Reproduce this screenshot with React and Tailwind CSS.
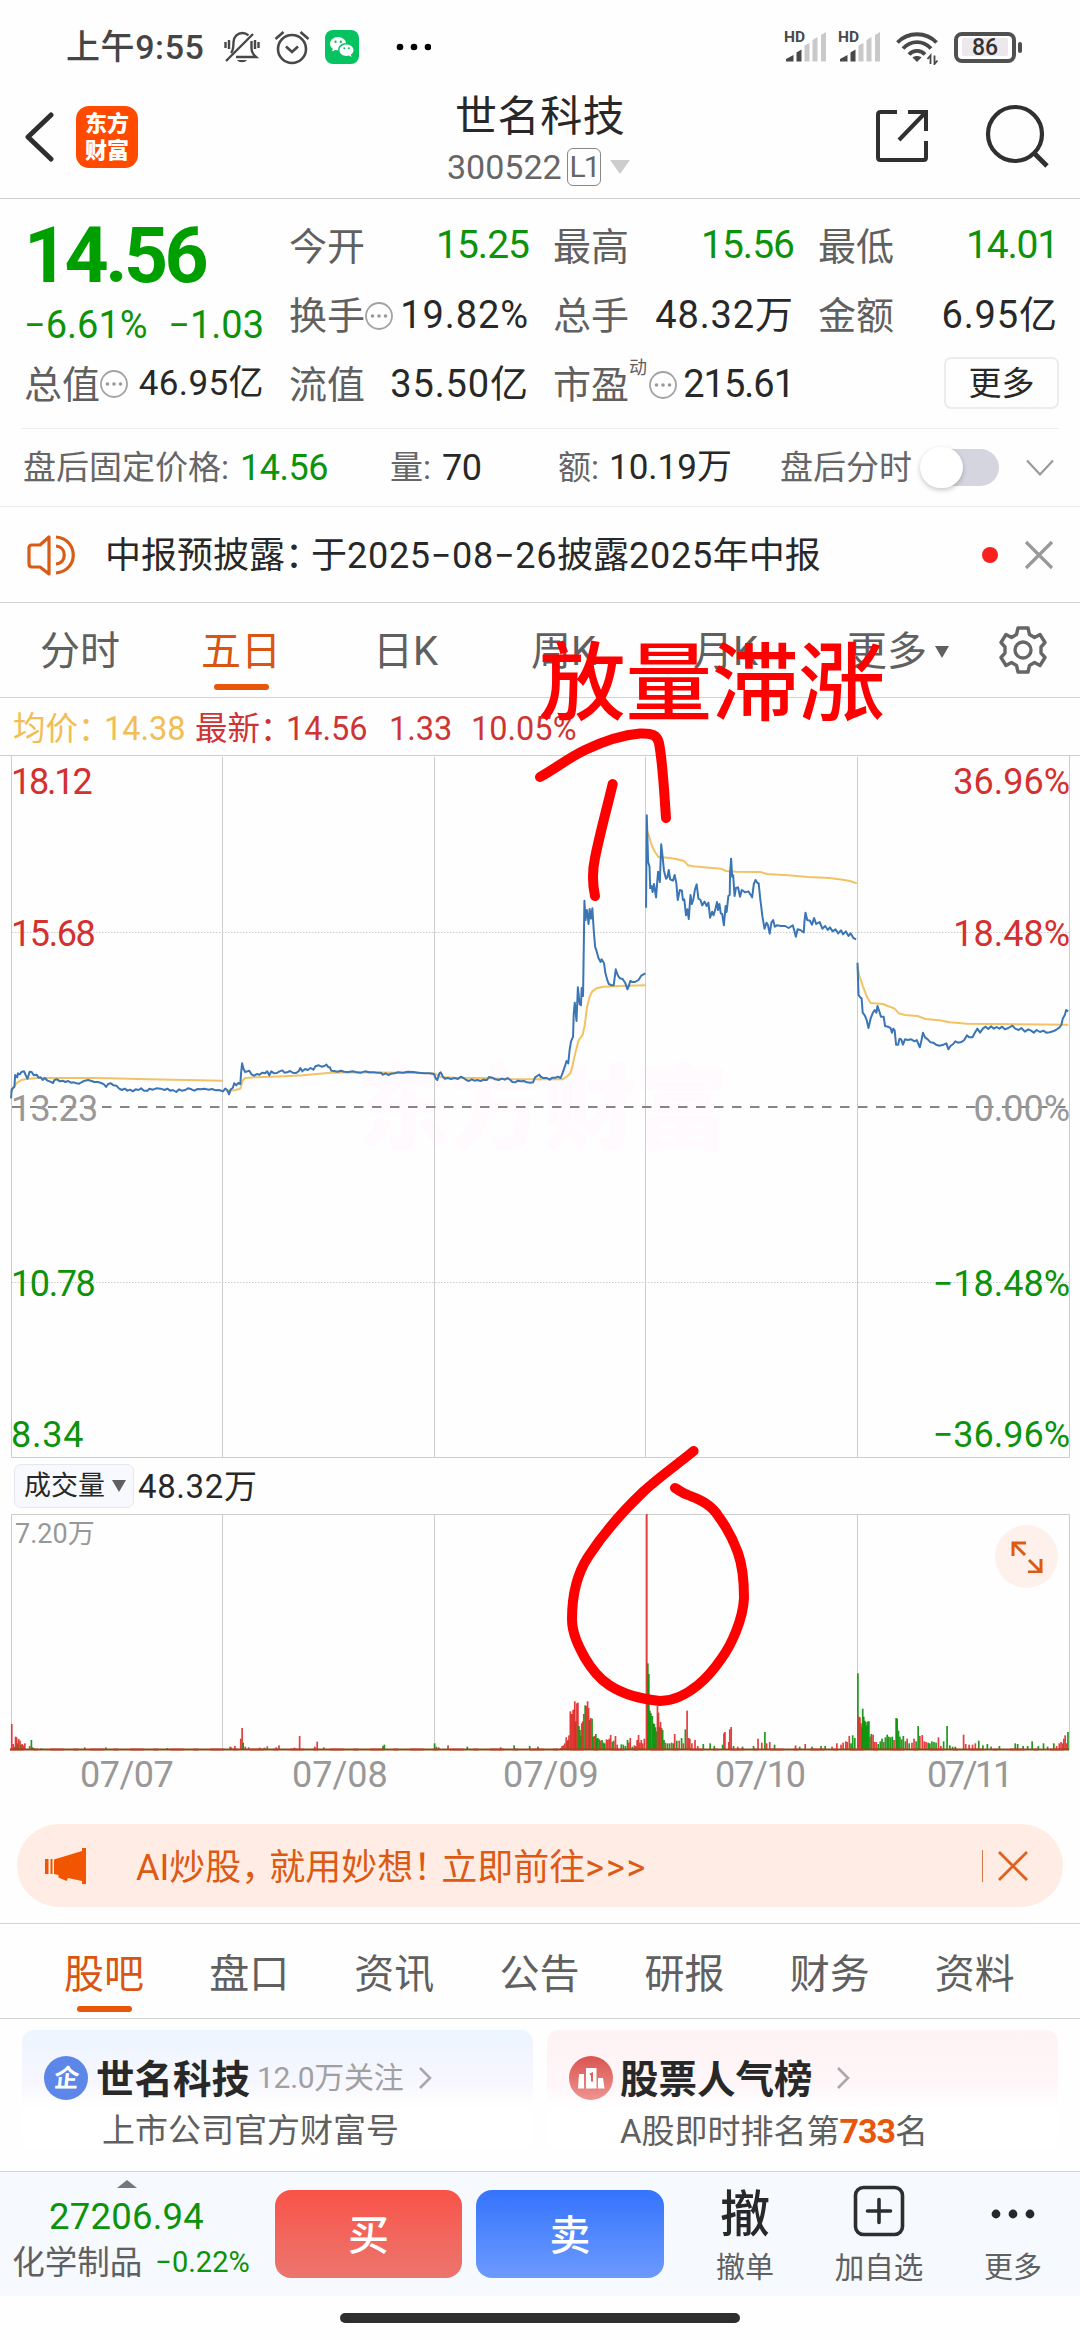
import React from 'react';

const RED = '#d3302f';
const GREEN = '#0b930b';

// The price and volume panels are stored in two halves, in capture units.
const UNIT_X = 1 / 2.904;
const UNIT_Y = 1 / 3;

const leftPrice = [
  '32,1495 34,1468 42,1460 44,1425 50,1432 52,1420 58,1423 62,1416 70,1414 74,1424 80,1436 86,1415 92,1416 98,1426 106,1424 112,1433 118,1432 124,1440 130,1434 138,1442 146,1445 154,1449 158,1440 166,1438 174,1444 182,1442 190,1446 198,1443 206,1448 214,1447 222,1450 230,1451 238,1446 246,1442 256,1440 266,1443 274,1446 284,1446 294,1449 302,1453 308,1461 314,1452 322,1450 330,1456 338,1457 346,1466 354,1470 362,1466 370,1472 378,1469 386,1474 394,1468 402,1470 410,1465 418,1472 428,1472 434,1466 444,1469 454,1465 466,1466 478,1470 486,1466 494,1472 502,1470 512,1476 520,1468 528,1472 538,1470 546,1465 556,1468 564,1472 574,1467 584,1468 594,1466 606,1469 616,1467 626,1471 636,1470 648,1474 654,1466 660,1470 665,1483 670,1468 676,1464 680,1450 686,1456 692,1449 698,1452 700,1420 703,1390 707,1406 712,1416 718,1414 724,1412 730,1423 738,1427 746,1422 754,1424 762,1418 770,1420 776,1414 782,1426 788,1414 796,1420 804,1419 812,1414 820,1411 826,1418 834,1417 842,1413 850,1418 860,1419 868,1413 872,1404 878,1414 886,1407 894,1410 902,1404 910,1409 916,1399 926,1396 934,1400 942,1398 948,1394 954,1402 958,1402 962,1412 970,1413 980,1415 990,1412 1000,1415 1012,1416 1024,1414 1036,1417 1048,1418 1060,1414 1072,1417 1084,1417 1096,1418 1106,1418 1112,1424 1120,1420 1128,1425 1136,1421 1146,1420 1156,1417 1170,1418 1184,1415 1200,1416 1216,1418 1232,1420 1246,1420 1260,1422 1266,1436 1270,1440 1276,1420 1280,1417 1286,1430 1292,1436 1300,1434 1310,1437 1320,1434 1330,1437 1338,1430 1346,1434 1354,1440 1362,1443 1370,1438 1378,1442 1386,1440 1396,1443 1404,1439 1414,1440 1420,1431 1430,1433 1438,1438 1448,1440 1458,1436 1466,1439 1474,1434 1482,1440 1488,1446 1496,1447 1504,1442 1512,1444 1522,1443 1530,1447 1540,1448 1548,1447 1554,1432 1560,1428 1566,1424 1572,1432',
];

const leftAverage = [
  '32,1478 40,1460 50,1448 62,1440 76,1437 110,1434 160,1434 260,1434 320,1435 400,1437 500,1439 580,1441 646,1442',
  '656,1472 680,1471 698,1466 704,1442 712,1434 740,1432 790,1430 840,1428 880,1426 920,1422 960,1418 1040,1417 1260,1420',
  '1262,1420 1280,1431 1320,1433 1400,1434 1480,1437 1570,1438',
];

const rightPrice = [
  '0,1430 10,1434 20,1434 28,1439 36,1433 46,1433 52,1430 60,1434 66,1418 72,1400 77,1383 82,1390 86,1350 90,1325 96,1310 98,1240 101,1208 106,1263 110,1162 115,1212 119,1216 121,1164 125,1188 127,1050 129,902 132,960 136,930 141,972 144,927 148,956 152,925 156,990 160,1040 164,1052 170,1075 176,1086 179,1078 186,1090 190,1120 196,1142 200,1152 208,1156 214,1156 220,1108 226,1126 232,1135 240,1137 248,1150 254,1168 258,1158 262,1143 268,1146 276,1146 286,1140 294,1127 306,1120',
  '308,923 310,646 314,785 318,800 320,865 324,858 327,876 331,852 337,892 341,838 343,815 348,846 352,733 356,770 360,812 366,836 370,832 374,810 378,838 386,842 391,825 396,850 400,900 406,870 412,872 415,900 419,898 424,946 428,928 432,957 437,885 441,912 445,900 450,868 455,853 460,896 466,900 471,916 478,905 484,918 489,908 494,953 500,935 504,946 510,925 514,906 517,930 521,912 525,940 529,942 534,976 539,918 542,936 547,888 551,884 552,820 555,776 558,830 561,826 565,888 569,864 575,862 581,890 586,870 596,877 605,874 616,892 621,852 626,840 632,850 635,850 640,900 646,950 652,986 658,968 662,975 667,1001 672,968 677,960 682,980 688,976 700,978 712,978 722,984 734,976 738,990 743,1010 748,988 756,990 766,997 768,965 771,938 776,960 784,962 790,974 796,954 802,972 812,966 820,986 828,978 836,990 842,982 850,994 858,988 866,1000 874,991 880,1003 888,994 896,1008 902,1000 910,1014 918,1018',
  '922,1088 925,1185 930,1192 934,1195 937,1238 943,1246 948,1258 954,1284 960,1256 966,1240 972,1230 977,1238 980,1218 986,1236 990,1250 998,1250 1002,1278 1010,1280 1018,1284 1022,1298 1026,1286 1030,1292 1034,1334 1040,1334 1044,1316 1049,1318 1054,1334 1060,1318 1068,1320 1078,1318 1088,1324 1094,1320 1103,1342 1108,1320 1112,1298 1118,1312 1126,1318 1134,1327 1142,1328 1150,1334 1160,1337 1172,1334 1180,1330 1186,1348 1192,1338 1200,1332 1206,1324 1214,1328 1224,1326 1232,1320 1240,1306 1246,1312 1256,1312 1262,1300 1270,1286 1278,1298 1286,1286 1294,1280 1302,1287 1310,1279 1318,1286 1326,1281 1334,1286 1342,1280 1350,1288 1360,1284 1372,1277 1380,1286 1390,1290 1398,1284 1408,1295 1418,1288 1426,1292 1434,1298 1442,1290 1452,1296 1462,1292 1470,1298 1480,1297 1490,1294 1498,1290 1508,1283 1514,1275 1518,1256 1524,1245 1528,1230 1534,1234',
];

const rightAverage = [
  '0,1438 40,1438 66,1438 80,1428 88,1420 94,1400 100,1370 106,1345 112,1322 124,1304 130,1275 136,1225 144,1190 152,1174 164,1165 184,1160 230,1158 306,1156',
  '310,690 316,706 324,735 334,756 344,771 370,773 396,777 418,783 430,796 444,799 476,802 526,806 540,813 570,815 640,816 658,822 720,826 780,831 840,834 880,839 900,843 920,850',
  '922,1100 928,1130 938,1160 950,1192 960,1209 996,1212 1010,1218 1030,1226 1042,1240 1060,1245 1096,1248 1120,1257 1160,1261 1190,1267 1240,1271 1320,1272 1534,1274',
];

// x, height, colour
const leftVolume = [
  [34, 78, 'r'], [38, 18, 'r'], [42, 10, 'r'], [45, 40, 'r'], [48, 38, 'r'], [51, 20, 'g'], [54, 33, 'r'], [58, 28, 'r'], [61, 15, 'g'], [64, 18, 'r'], [68, 14, 'r'], [72, 20, 'r'],
  [86, 12, 'r'], [91, 30, 'g'], [94, 8, 'g'], [98, 6, 'r'], [120, 5, 'g'], [246, 8, 'r'], [307, 8, 'g'], [486, 6, 'g'], [668, 10, 'r'], [672, 8, 'r'], [682, 12, 'r'],
  [699, 34, 'r'], [703, 66, 'r'], [706, 22, 'g'], [712, 10, 'r'], [722, 8, 'r'], [754, 7, 'r'], [768, 7, 'g'], [776, 11, 'r'], [802, 8, 'r'], [810, 14, 'r'], [855, 7, 'r'],
  [870, 42, 'r'], [914, 10, 'r'], [921, 25, 'r'], [940, 8, 'r'], [1112, 12, 'g'], [1116, 16, 'g'], [1262, 20, 'g'], [1267, 10, 'g'], [1274, 8, 'r'], [1301, 14, 'r'],
  [1357, 10, 'g'], [1454, 8, 'r'], [1493, 14, 'g'], [1538, 12, 'g'], [1562, 10, 'g'],
];

const rightVolume = [
  [60, 6, 'r'], [64, 12, 'r'], [68, 14, 'r'], [72, 20, 'r'], [76, 38, 'r'], [79, 28, 'r'], [82, 30, 'g'], [84, 44, 'r'], [88, 116, 'r'], [90, 108, 'r'], [93, 108, 'r'], [96, 120, 'r'], [99, 122, 'r'], [101, 146, 'r'], [104, 86, 'g'],
  [107, 140, 'r'], [110, 142, 'r'], [113, 72, 'g'], [116, 60, 'g'], [119, 42, 'g'], [121, 80, 'r'], [124, 86, 'r'], [127, 108, 'r'], [131, 134, 'g'], [134, 132, 'r'], [138, 146, 'r'], [141, 126, 'r'], [144, 90, 'g'], [147, 96, 'r'], [151, 94, 'g'], [154, 40, 'g'],
  [158, 42, 'r'], [162, 48, 'g'], [165, 34, 'g'], [168, 36, 'g'], [172, 32, 'g'], [176, 28, 'r'], [180, 30, 'g'], [184, 22, 'g'], [188, 20, 'g'], [193, 32, 'r'], [197, 30, 'r'], [201, 34, 'r'], [205, 45, 'r'], [210, 25, 'g'], [214, 28, 'r'], [219, 42, 'r'], [224, 16, 'r'],
  [236, 17, 'g'], [242, 16, 'g'], [248, 12, 'g'], [254, 30, 'g'], [258, 22, 'r'], [262, 36, 'r'], [268, 10, 'g'], [274, 14, 'r'], [278, 12, 'r'], [282, 30, 'r'], [286, 45, 'r'], [290, 22, 'r'], [294, 30, 'r'], [298, 20, 'r'], [303, 34, 'r'],
  [310, 708, 'r'], [313, 260, 'g'], [316, 228, 'g'], [319, 118, 'g'], [322, 110, 'g'], [326, 102, 'g'], [329, 80, 'g'], [332, 78, 'g'], [335, 68, 'g'], [338, 56, 'g'], [341, 132, 'r'], [344, 112, 'r'], [347, 70, 'g'], [350, 84, 'r'], [353, 66, 'r'], [356, 60, 'g'], [360, 30, 'g'], [364, 22, 'r'],
  [370, 20, 'g'], [376, 20, 'g'], [382, 22, 'r'], [387, 20, 'g'], [391, 48, 'r'], [397, 28, 'g'], [404, 28, 'r'], [411, 36, 'g'], [416, 20, 'r'], [422, 62, 'g'], [427, 118, 'r'], [431, 36, 'r'], [435, 34, 'r'], [441, 20, 'r'], [450, 30, 'r'], [458, 12, 'r'],
  [474, 18, 'g'], [494, 20, 'g'], [506, 12, 'g'], [530, 16, 'g'], [534, 50, 'r'], [537, 54, 'r'], [548, 24, 'r'], [551, 62, 'r'], [555, 69, 'r'], [562, 12, 'g'], [574, 10, 'r'], [588, 10, 'g'], [620, 12, 'g'], [633, 34, 'r'], [644, 22, 'r'], [653, 54, 'g'], [658, 20, 'r'],
  [667, 24, 'r'], [681, 16, 'g'], [742, 14, 'r'], [754, 10, 'g'], [770, 18, 'r'], [790, 10, 'g'], [816, 12, 'g'], [828, 12, 'g'], [848, 10, 'r'], [862, 20, 'r'], [874, 16, 'r'], [880, 22, 'r'], [888, 26, 'r'], [892, 24, 'r'], [898, 42, 'r'], [903, 20, 'g'], [908, 44, 'g'], [914, 36, 'g'],
  [923, 230, 'g'], [926, 100, 'r'], [929, 98, 'r'], [932, 80, 'r'], [935, 68, 'g'], [937, 124, 'g'], [940, 100, 'g'], [943, 88, 'g'], [946, 84, 'g'], [949, 74, 'g'], [952, 86, 'g'], [955, 86, 'g'], [958, 40, 'r'], [962, 48, 'g'], [967, 46, 'r'], [971, 24, 'r'], [976, 24, 'r'],
  [982, 18, 'g'], [988, 26, 'g'], [993, 34, 'g'], [998, 24, 'r'], [1003, 38, 'g'], [1008, 46, 'g'], [1013, 40, 'g'], [1018, 38, 'g'], [1023, 40, 'g'], [1028, 30, 'r'], [1034, 96, 'g'], [1037, 94, 'g'], [1041, 58, 'g'], [1045, 40, 'g'], [1050, 32, 'g'], [1055, 42, 'g'], [1061, 26, 'g'], [1066, 34, 'r'], [1072, 20, 'g'],
  [1080, 22, 'r'], [1086, 34, 'r'], [1092, 26, 'g'], [1098, 72, 'g'], [1103, 42, 'r'], [1110, 45, 'r'], [1116, 26, 'r'], [1121, 24, 'r'], [1127, 22, 'g'], [1132, 20, 'g'], [1138, 26, 'g'], [1144, 24, 'g'], [1150, 22, 'g'], [1157, 38, 'r'], [1164, 12, 'r'], [1172, 26, 'g'], [1182, 72, 'g'], [1190, 14, 'g'],
  [1198, 10, 'g'], [1206, 10, 'g'], [1230, 46, 'r'], [1236, 18, 'r'], [1246, 16, 'r'], [1256, 16, 'r'], [1264, 20, 'r'], [1274, 28, 'g'], [1286, 14, 'g'], [1299, 18, 'g'], [1310, 10, 'g'], [1334, 12, 'g'], [1380, 20, 'g'], [1387, 18, 'g'], [1403, 12, 'g'], [1416, 12, 'g'], [1429, 26, 'g'], [1447, 12, 'g'], [1462, 20, 'g'],
  [1474, 10, 'g'], [1492, 20, 'g'], [1500, 12, 'r'], [1508, 20, 'r'], [1513, 24, 'r'], [1518, 20, 'r'], [1521, 34, 'r'], [1525, 44, 'r'], [1529, 20, 'r'], [1533, 54, 'g'],
];

const dayLines = [222.5, 434.5, 645.5, 857.5];

const chartLabels = [
  { y: 794, left: '18.12', right: '36.96%', color: RED, spacing: -2.2 },
  { y: 946, left: '15.68', right: '18.48%', color: RED, spacing: -1.4 },
  { y: 1121, left: '13.23', right: '0.00%', color: '#989898', spacing: -0.8 },
  { y: 1296, left: '10.78', right: '−18.48%', color: GREEN, spacing: -1.4 },
  { y: 1447, left: '8.34', right: '−36.96%', color: GREEN, spacing: 0.8 },
];

const Lines = ({ data, color, x }) => (
  <g transform={`translate(${x} 600) scale(${UNIT_X} ${UNIT_Y})`}>
    {data.map((points) => (
      <polyline key={points} points={points} fill="none" stroke={color} strokeWidth="2" strokeLinejoin="round" vectorEffect="non-scaling-stroke" />
    ))}
  </g>
);

const Bars = ({ data, x }) => (
  <g>
    {data.map(([bx, h, c]) => (
      <rect key={bx} x={x + bx * UNIT_X - 0.8} y={1750 - h / 3} width="1.7" height={h / 3} fill={c === 'r' ? '#df2f2d' : '#0a930a'} opacity="0.92" />
    ))}
  </g>
);

const InfoDots = () => (
  <svg className="h-7 w-7 shrink-0" viewBox="0 0 28 28" fill="none">
    <circle cx="14" cy="14" r="13" stroke="#a3a3a3" strokeWidth="1.8" />
    <circle cx="7.5" cy="14" r="1.8" fill="#999" />
    <circle cx="14" cy="14" r="1.8" fill="#999" />
    <circle cx="20.5" cy="14" r="1.8" fill="#999" />
  </svg>
);

const Signal = () => (
  <div className="relative h-[32px] w-[42px]">
    <svg className="h-[32px] w-[42px]" viewBox="0 0 42 32">
      <path d="M1 30.500v-2.500l7.500-4v6.500z" fill="#484848" />
      <path d="M11.500 30.500v-9l5-3v12z" fill="#484848" />
      <path d="M19.500 30.500v-16l5-2.500v18.500zM27.500 30.500v-21.500l5-3v24.500zM36 30.500v-26.500l5-3v29.500z" fill="#c9c9c9" />
    </svg>
    <span className="absolute -left-px -top-px text-[15.500px] font-bold leading-none text-[#4a4a4a]">HD</span>
  </div>
);

const StatusBar = () => (
  <div className="flex h-[94px] items-center pl-[66px] pr-[58px]">
    <span className="w-[158px] whitespace-nowrap text-[34px] font-medium leading-none tracking-[0.600px] text-[#454545]">上午9:55</span>
    <svg className="h-[36px] w-[36px]" viewBox="0 0 36 36" fill="none" stroke="#484848" strokeWidth="2.400">
      <path d="M7 24c2-2 2.500-4 2.500-11 0-5 4-9 9-9 2.500 0 4.500 1 6 2.300M27.500 12v7c0 4 1 6 4.500 9H12" />
      <path d="M2 32L29 5M1.500 13v6M5 11v9M34.500 13v6M31 11v9" />
      <path d="M13 31h10c-2 3-8 3-10 0z" fill="#484848" stroke="none" />
    </svg>
    <svg className="ml-[14px] h-[36px] w-[36px]" viewBox="0 0 36 36" fill="none" stroke="#484848" strokeWidth="2.600">
      <circle cx="18" cy="20" r="14" />
      <path d="M12 17.500l6 5.500 6-5.500M1.500 10l8-7M34.500 10l-8-7" />
    </svg>
    <svg className="ml-[15px] h-[34px] w-[34px]" viewBox="0 0 34 34">
      <rect width="34" height="34" rx="8" fill="#05c361" />
      <path d="M13 7C8.500 7 5 10 5 13.800c0 2 1 3.800 2.800 5L7 21.500l3.200-1.600c1 .3 2 .4 3 .4C13 16 16.500 13 21 13 20.500 9.500 17 7 13 7z" fill="#fff" />
      <path d="M21.500 14.500c-4 0-7 2.500-7 5.700s3 5.700 7 5.700c.8 0 1.700-.1 2.400-.4l2.600 1.400-.7-2.300c1.700-1 2.700-2.700 2.700-4.400 0-3.200-3-5.700-7-5.700z" fill="#fff" />
      <g fill="#05c361">
        <circle cx="10.500" cy="11.800" r="1.200" />
        <circle cx="15.800" cy="11.800" r="1.200" />
        <circle cx="19.300" cy="18.300" r="1" />
        <circle cx="23.800" cy="18.300" r="1" />
      </g>
    </svg>
    <svg className="ml-[36px] h-[8px] w-[36px]" viewBox="0 0 36 8">
      <circle cx="5" cy="4" r="3.300" />
      <circle cx="19" cy="4" r="3.300" />
      <circle cx="33" cy="4" r="3.300" />
    </svg>
    <div className="ml-auto flex items-center">
      <Signal />
      <div className="ml-[12px]"><Signal /></div>
      <svg className="ml-[14px] h-[36px] w-[44px]" viewBox="0 0 44 36" fill="none" stroke="#484848" strokeWidth="3.800">
        <path d="M2.500 13.500C13 2.500 31 2.500 41.500 13.500M8 19.500c8-8.500 20-8.500 28 0M14 25.500c4.500-4.800 11.500-4.800 16 0" />
        <path d="M17.500 28.500c2-2 7-2 9 0L22 33z" fill="#484848" stroke="none" />
        <path d="M35.500 35v-8.500l-3 3.500M39.500 26.500V35l3-3.500" strokeWidth="1.800" />
      </svg>
      <div className="ml-[15px] flex h-[31px] w-[62px] items-center rounded-[8px] border-4 border-[#505050] px-[4px]">
        <div className="flex h-[18px] w-full items-center justify-center rounded-[2px] bg-[#ece8ec] text-[23px] font-medium leading-none text-[#333]">86</div>
      </div>
      <div className="ml-[2px] h-[11px] w-[4px] rounded-full bg-[#505050]" />
    </div>
  </div>
);

const Header = () => (
  <div className="flex h-[105px] items-start border-b border-[#d0d0d0] pl-[24px] pr-[31px]">
    <div className="mt-[12px] flex h-[62px] w-[423px] items-center">
      <svg className="h-[50px] w-[30px]" viewBox="0 0 30 50" fill="none" stroke="#2e2e2e" strokeWidth="5" strokeLinecap="round">
        <path d="M27 3L4 25l23 22" strokeLinejoin="round" />
      </svg>
      <div className="ml-[22px] flex h-[62px] w-[62px] flex-col items-center justify-center rounded-[13px] bg-[#ff4a00] text-[22px] font-black leading-[27px] text-white">
        <span>东方</span>
        <span>财富</span>
      </div>
    </div>
    <div className="mt-[2px] flex flex-col">
      <span className="ml-[8px] text-[42px] leading-[42px] tracking-[0.600px] text-[#282828]">世名科技</span>
      <div className="mt-[10px] flex items-center">
        <span className="w-[120px] text-[34px] leading-none text-[#666]">300522</span>
        <span className="flex h-[38px] w-[34px] items-center justify-center rounded-[6px] border border-[#888] text-[30px] leading-none tracking-[-2px] text-[#666]">L1</span>
        <svg className="ml-[9px] h-[14px] w-[20px]" viewBox="0 0 20 14"><path d="M0 0h20L10 14z" fill="#cdcdcd" /></svg>
      </div>
    </div>
    <svg className="ml-auto mt-[15px] h-[54px] w-[54px]" viewBox="0 0 54 54" fill="none" stroke="#303030" strokeWidth="4">
      <path d="M22 3H5.500Q3 3 3 5.500v43Q3 51 5.500 51h43q2.500 0 2.500-2.500V32M33 3h18v19M50 4L24 31" />
    </svg>
    <svg className="ml-[56px] mt-[10px] h-[64px] w-[64px]" viewBox="0 0 64 64" fill="none" stroke="#303030" strokeWidth="4.200">
      <circle cx="30" cy="30" r="27" />
      <path d="M49 49l13 13" strokeWidth="4.800" />
    </svg>
  </div>
);

const Stat = ({ label, children, tone = 'text-[38px] tracking-[0.900px] text-[#282828]' }) => (
  <div className="flex h-[69px] items-center justify-between whitespace-nowrap leading-none">
    <span className="flex translate-y-px items-center text-[38px] text-[#606060]">{label}</span>
    <span className={tone}>{children}</span>
  </div>
);

const down = 'text-[39px] tracking-[-1px] text-[#0b930b]';

const Quote = () => (
  <div className="mx-[22px] flex h-[230px] border-b border-[#ececec] pl-[2px] pt-[12px]">
    <div className="w-[240px]">
      <div className="flex h-[90px] items-center text-[77px] font-bold leading-none tracking-[-3.600px] text-[#009f00]">14.56</div>
      <div className="flex h-[48px] items-center justify-between text-[38px] leading-none text-[#0b930b]">
        <span>−6.61%</span>
        <span>−1.03</span>
      </div>
      <div className="flex h-[69px] items-center whitespace-nowrap leading-none">
        <span className="translate-y-px text-[38px] text-[#606060]">总值</span>
        <InfoDots />
        <span className="ml-auto text-[35px] tracking-[0.400px] text-[#282828]">46.95亿</span>
      </div>
    </div>
    <div className="ml-[25px] w-[240px]">
      <Stat label="今开" tone={down}>15.25</Stat>
      <Stat label={<>换手<InfoDots /></>}>19.82%</Stat>
      <Stat label="流值">35.50亿</Stat>
    </div>
    <div className="ml-[24px] w-[241px]">
      <Stat label="最高" tone={down}>15.56</Stat>
      <Stat label="总手">48.32万</Stat>
      <Stat
        label={<>市盈<span className="mr-[2px] -translate-y-[17px] text-[18px]">动</span><InfoDots /></>}
        tone="text-[38px] tracking-[-1px] text-[#282828]"
      >
        215.61
      </Stat>
    </div>
    <div className="ml-[24px] w-[240px]">
      <Stat label="最低" tone="text-[39px] tracking-[-1.200px] text-[#0b930b]">14.01</Stat>
      <Stat label="金额">6.95亿</Stat>
      <div className="-mr-px ml-auto mt-[8px] flex h-[52px] w-[115px] items-center justify-center rounded-[7px] border-2 border-[#ececef] text-[33px] leading-none text-[#282828]">更多</div>
    </div>
  </div>
);

const AfterHours = () => (
  <div className="flex h-[78px] items-center whitespace-nowrap border-b border-[#ececec] pl-[23px] pr-[26px] text-[33px] leading-none text-[#666]">
    <span className="w-[217px]">盘后固定价格:</span>
    <span className="w-[150px] text-[36px] tracking-[-0.500px] text-[#0b930b]">14.56</span>
    <span className="w-[52px]">量:</span>
    <span className="w-[116px] text-[36px] tracking-[-0.500px] text-[#282828]">70</span>
    <span className="w-[51px]">额:</span>
    <span className="w-[171px] text-[35px] text-[#282828]">10.19万</span>
    <span>盘后分时</span>
    <div className="ml-[9px] flex h-[42px] w-[78px] items-center">
      <div className="flex h-[37px] w-[78px] items-center rounded-full bg-[#d4d5df]">
        <div className="-ml-[1px] h-[41px] w-[43px] shrink-0 rounded-full bg-white shadow-[0_2px_5px_rgba(0,0,0,0.22)]" />
      </div>
    </div>
    <svg className="ml-auto h-[18px] w-[28px]" viewBox="0 0 28 18" fill="none" stroke="#999" strokeWidth="2.200">
      <path d="M1 1.500l13 14 13-14" />
    </svg>
  </div>
);

const Notice = () => (
  <div className="flex h-[96px] items-center border-b border-[#d4d4d4] pl-[26px] pr-[26px]">
    <svg className="h-[44px] w-[50px]" viewBox="0 0 50 44" fill="none" stroke="#d95c16" strokeWidth="3.200">
      <path d="M23 4v37l-9-7H6q-3 0-3-3V15q0-3 3-3h8z" strokeLinejoin="round" />
      <path d="M30 4c23 2 23 34 0 36M30 13c11 1 11 17 0 18" />
    </svg>
    <span className="ml-[29px] translate-y-px whitespace-nowrap text-[36px] leading-none text-[#282828]">
      中报预披露<span className="-mr-[10px]">：</span>于<span className="tracking-[0.700px]">2025−08−26</span>披露<span className="tracking-[0.700px]">2025</span>年中报
    </span>
    <div className="ml-auto h-[16px] w-[16px] rounded-full bg-[#fb2020]" />
    <svg className="ml-[26px] h-[30px] w-[30px]" viewBox="0 0 30 30" stroke="#999" strokeWidth="3.200">
      <path d="M2 2l26 26M28 2L2 28" />
    </svg>
  </div>
);

const PeriodTabs = () => (
  <div className="flex h-[95px] items-center border-b border-[#d4d4d4] pl-[40px] pr-[33px] pt-[4px] text-[40px] leading-none text-[#606060]">
    <span className="w-[161px]">分时</span>
    <span className="relative w-[172px] text-[#d95512]">
      五日
      <i className="absolute left-[13px] top-[52px] h-[6px] w-[55px] rounded-full bg-[#e8560a]" />
    </span>
    <span className="w-[158px]">日K</span>
    <span className="w-[162px]">周K</span>
    <span className="w-[154px]">月K</span>
    <span>更多</span>
    <svg className="ml-[8px] h-[12px] w-[14px]" viewBox="0 0 14 12"><path d="M0 0h14L7 12z" fill="#606060" /></svg>
    <svg className="-mt-[4px] ml-auto h-[50px] w-[48px]" viewBox="0 0 48 50" fill="none" stroke="#666" strokeWidth="3.400">
      <path d="M19 3h10l1.500 6.500 5 3L41 9.500l5 8-4 4.500v6l4 4.500-5 8-5.500-3-5 3L29 47H19l-1.500-6.500-5-3-5.500 3-5-8L6 28v-6l-4-4.500 5-8 5.500 3 5-3z" strokeLinejoin="round" />
      <circle cx="24" cy="25" r="8" />
    </svg>
  </div>
);

const Legend = () => (
  <div className="flex h-[57px] items-center whitespace-nowrap pl-[13px] pt-[6px] text-[32.500px] leading-none text-[#cf3434]">
    <span className="w-[91px] text-[#f2bd55]">均价：</span>
    <span className="w-[91px] text-[#f2bd55]">14.38</span>
    <span className="w-[91px]">最新：</span>
    <span className="w-[103px]">14.56</span>
    <span className="w-[82px]">1.33</span>
    <span>10.05%</span>
  </div>
);

const PriceChart = () => (
  <svg className="block h-[703px] w-[1080px]" viewBox="0 755 1080 703">
    <text x="357" y="1142" fontSize="93" fontWeight="900" fill="#fefafe">东方财富</text>
    <g stroke="#cdcdcd">
      <path d="M0 755.500H1080M11.500 755V1457.500H1069.500V755" fill="none" />
      {dayLines.map((x) => <path key={x} d={`M${x} 757V1457`} />)}
      <path d="M12 932.500H1069M12 1282.500H1069" strokeDasharray="1.500 1.500" />
      <path d="M12 1107H1069" stroke="#858585" strokeWidth="1.800" strokeDasharray="9.500 8.500" />
    </g>
    <Lines data={leftAverage} color="#f2c264" x={0} />
    <Lines data={rightAverage} color="#f2c264" x={540} />
    <Lines data={leftPrice} color="#3a75b5" x={0} />
    <Lines data={rightPrice} color="#3a75b5" x={540} />
    {chartLabels.map(({ y, left, right, color, spacing }) => (
      <g key={left} fontSize="36" fill={color}>
        <text x="11" y={y} letterSpacing={spacing}>{left}</text>
        <text x="1070" y={y} textAnchor="end">{right}</text>
      </g>
    ))}
  </svg>
);

const VolumeChart = () => (
  <>
    <div className="flex h-[56px] items-center pl-[14px] leading-none text-[#282828]">
      <div className="flex h-[44px] w-[120px] items-center rounded-[7px] border border-[#e6e8ee] bg-[#f7f9fe] pl-[9px] text-[27px]">
        成交量
        <svg className="ml-[7px] h-[12px] w-[14px]" viewBox="0 0 14 12"><path d="M0 0h14L7 12z" fill="#606060" /></svg>
      </div>
      <span className="ml-[4px] text-[33px] tracking-[0.600px]">48.32万</span>
    </div>
    <div className="relative">
      <svg className="block h-[240px] w-[1080px]" viewBox="0 1514 1080 240">
        <g stroke="#cdcdcd" fill="none">
          <path d="M11.500 1750V1514.500H1069.500V1750" />
          {dayLines.map((x) => <path key={x} d={`M${x} 1514V1750`} />)}
        </g>
        <Bars data={leftVolume} x={0} />
        <Bars data={rightVolume} x={540} />
        <path d="M10 1749.500H1069" stroke="#8a4a16" strokeWidth="2" />
        <path d="M10 1749.500H1069" stroke="#d3302f" strokeWidth="2" strokeDasharray="14 9 5 12" opacity="0.7" />
        <text x="15" y="1543" fontSize="27" fill="#989898">7.20万</text>
      </svg>
      <div className="absolute left-[995px] top-[11px] flex h-[63px] w-[63px] items-center justify-center rounded-full bg-[#fef1ec]">
        <svg className="h-[32px] w-[32px]" viewBox="0 0 32 32" fill="none" stroke="#dd5a14" strokeWidth="3">
          <path d="M2 15V2h13M3 3l11 11M30 18v13H17M29 30L18 19" />
        </svg>
      </div>
    </div>
    <div className="flex h-[70px] pl-[80px] pt-[3px] text-[36px] leading-none text-[#989898]">
      <span className="w-[212px] tracking-[-0.500px]">07/07</span>
      <span className="w-[211px]">07/08</span>
      <span className="w-[212px]">07/09</span>
      <span className="w-[212px] tracking-[-1.200px]">07/10</span>
      <span className="tracking-[-2.400px]">07/11</span>
    </div>
  </>
);

const Banner = () => (
  <div className="mx-[17px] flex h-[83px] items-center rounded-full bg-[#ffede5] pl-[28px] pr-[35px] text-[36px] leading-none text-[#dc5a14]">
    <svg className="h-[36px] w-[42px]" viewBox="0 0 42 36" fill="#f25500">
      <path d="M0 11h3.500v15H0zM5.500 11h2v15h-2zM9 11.500L37 3V0h4v36h-4v-3l-14-3-1.500 3-8-3.500V27L9 26z" />
    </svg>
    <span className="ml-[49px] translate-y-[2px] whitespace-nowrap">
      AI炒股<span className="-mr-[8px]">，</span>就用妙想<span className="-mr-[8px]">！</span>立即前往<span className="tracking-[1.800px]">&gt;&gt;&gt;</span>
    </span>
    <div className="ml-auto h-[32px] w-[1.500px] bg-[#cf7b47]" />
    <svg className="ml-[15px] h-[30px] w-[30px]" viewBox="0 0 30 30" stroke="#e0601c" strokeWidth="2.800">
      <path d="M1 1l28 28M29 1L1 29" />
    </svg>
  </div>
);

const SectionTabs = () => (
  <div className="mt-[16px] flex h-[96px] items-center border-y border-[#d4d4d4] pl-[64px] pt-[7px] text-[40px] leading-none text-[#606060]">
    <span className="relative w-[145.600px] text-[#d95512]">
      股吧
      <i className="absolute left-[13px] top-[51px] h-[6px] w-[55px] rounded-full bg-[#e8560a]" />
    </span>
    {['盘口', '资讯', '公告', '研报', '财务', '资料'].map((name) => (
      <span key={name} className="w-[145.600px]">{name}</span>
    ))}
  </div>
);

const Chevron = () => (
  <svg className="h-[22px] w-[14px]" viewBox="0 0 14 22" fill="none" stroke="#a8a8a8" strokeWidth="2.600">
    <path d="M2 1l10 10L2 21" />
  </svg>
);

const Cards = () => (
  <div className="flex h-[153px] gap-[14px] border-b border-[#d4d4d4] px-[22px] pt-[11px] leading-none">
    <div className="h-[120px] w-[511px] rounded-[12px] bg-gradient-to-b from-[#edf5fe] via-[#f8f7fe] via-45% to-white to-65% pl-[22px] pt-[26px]">
      <div className="flex h-[44px] items-center">
        <svg className="h-[44px] w-[44px]" viewBox="0 0 44 44">
          <circle cx="22" cy="22" r="22" fill="#5c86e8" />
          <text x="22" y="31" fontSize="25" fontWeight="700" fill="#fff" textAnchor="middle" transform="skewX(-6) translate(3 0)">企</text>
        </svg>
        <span className="ml-[8px] translate-y-[2px] text-[38.500px] font-bold text-[#282828]">世名科技</span>
        <span className="ml-[7px] w-[161px] text-[30px] tracking-[-0.300px] text-[#a0a0a0]">12.0万关注</span>
        <Chevron />
      </div>
      <div className="ml-[58px] mt-[14px] text-[33px] text-[#606060]">上市公司官方财富号</div>
    </div>
    <div className="h-[120px] w-[511px] rounded-[12px] bg-gradient-to-b from-[#fef3f4] via-[#fef6f9] via-45% to-white to-65% pl-[22px] pt-[26px]">
      <div className="flex h-[44px] items-center">
        <svg className="h-[44px] w-[44px]" viewBox="0 0 44 44">
          <defs>
            <linearGradient id="rank" x1="0" y1="0" x2="0" y2="1">
              <stop offset="0" stopColor="#d95450" />
              <stop offset="1" stopColor="#ee9490" />
            </linearGradient>
          </defs>
          <circle cx="22" cy="22" r="22" fill="url(#rank)" />
          <path d="M10 18h5v14.500H9zM17 12h10.500v20.500H17zM29 22h5l1.500 10.500H29z" fill="#fff" />
          <path d="M21 18.500l2-1v8" stroke="#dd625e" strokeWidth="2" fill="none" />
        </svg>
        <span className="ml-[7px] w-[216px] translate-y-[2px] text-[38.500px] font-bold text-[#282828]">股票人气榜</span>
        <Chevron />
      </div>
      <div className="ml-[51px] mt-[14px] text-[33px] text-[#606060]">A股即时排名第<b className="text-[34px] tracking-[-1px] text-[#e8560a]">733</b>名</div>
    </div>
  </div>
);

const TradeBar = () => (
  <div className="flex h-[124px] bg-[#f6f9fe] leading-none">
    <div className="flex w-[275px] flex-col items-center pr-[22px] pt-[8px]">
      <svg className="h-[8px] w-[20px]" viewBox="0 0 20 8"><path d="M0 8L10 0l10 8z" fill="#777" /></svg>
      <span className="mt-[11px] text-[36.500px] tracking-[0.200px] text-[#0b930b]">27206.94</span>
      <div className="ml-[9px] mt-[11px] flex items-center whitespace-nowrap">
        <span className="text-[32.500px] text-[#606060]">化学制品</span>
        <span className="ml-[13px] text-[29px] text-[#0b930b]">−0.22%</span>
      </div>
    </div>
    <div className="mt-[18px] flex h-[88px] w-[187px] items-center justify-center rounded-[16px] bg-gradient-to-b from-[#f95248] to-[#eb756e] pt-[5px] text-[41px] font-medium text-white">买</div>
    <div className="ml-[14px] mt-[18px] flex h-[88px] w-[188px] items-center justify-center rounded-[16px] bg-gradient-to-b from-[#3573fd] to-[#6c9afd] pt-[5px] text-[41px] font-medium text-white">卖</div>
    <div className="ml-[21px] flex w-[120px] flex-col items-center pt-[18px] text-[#606060]">
      <span className="h-[50px] text-[50px] font-medium text-[#282828]">撤</span>
      <span className="mt-[14px] text-[29px]">撤单</span>
    </div>
    <div className="ml-[14px] flex w-[120px] flex-col items-center pt-[13px] text-[#606060]">
      <svg className="h-[52px] w-[52px]" viewBox="0 0 52 52" fill="none" stroke="#2e2e2e" strokeWidth="3.600">
        <rect x="2.500" y="2.500" width="47" height="47" rx="8" />
        <path d="M26 14.500v23M14.500 26h23" strokeLinecap="round" />
      </svg>
      <span className="mt-[17px] text-[29.500px]">加自选</span>
    </div>
    <div className="ml-[14px] flex w-[120px] flex-col items-center pt-[37px] text-[#606060]">
      <svg className="h-[10px] w-[44px]" viewBox="0 0 44 10" fill="#282828">
        <circle cx="5" cy="5" r="4.400" />
        <circle cx="22" cy="5" r="4.400" />
        <circle cx="39" cy="5" r="4.400" />
      </svg>
      <span className="mt-[35px] text-[29px]">更多</span>
    </div>
  </div>
);

const Annotations = () => (
  <svg className="pointer-events-none absolute left-0 top-0 h-[2340px] w-[1080px]" viewBox="0 0 1080 2340" fill="none" stroke="#fe0000" strokeWidth="10" strokeLinecap="round" strokeLinejoin="round">
    <text x="539" y="714" fontSize="86.500" fontWeight="500" fill="#fe0000" stroke="none">放量滞涨</text>
    <path d="M540 777C556 768 570 757 585 750C606 740 622 735 640 733.500C652 733 657 735 659 743C663 765 664 790 666 818" />
    <path d="M612.700 784C607 808 600 833 595 858C592 872 592 882 595 896" />
    <path d="M693.600 1451C678 1464 659 1477 643 1492C622 1512 603 1534 588 1557C577 1574 572 1597 572 1619C572 1634 579 1647 585 1658C592 1670 600 1679 609 1685C624 1695 640 1699 660 1701C675 1701 687 1694 698 1685C708 1677 715 1668 722.500 1657C731 1645 743 1620 744 1598C744 1582 743 1567 738 1553C733 1539 727 1528 719 1517C710 1502 695 1498 688 1495C682 1493 679 1490 675 1488" />
  </svg>
);

const App = () => {
  return (
    <div className="relative h-[2340px] w-[1080px] overflow-hidden bg-[#fefefe] font-[Roboto,'Noto_Sans_CJK_SC',sans-serif]">
      <StatusBar />
      <Header />
      <Quote />
      <AfterHours />
      <Notice />
      <PeriodTabs />
      <Legend />
      <PriceChart />
      <VolumeChart />
      <Banner />
      <SectionTabs />
      <Cards />
      <TradeBar />
      <div className="mx-auto mt-[17px] h-[10px] w-[400px] rounded-full bg-[#2e2e2e]" />
      <Annotations />
    </div>
  );
};

export default App;
